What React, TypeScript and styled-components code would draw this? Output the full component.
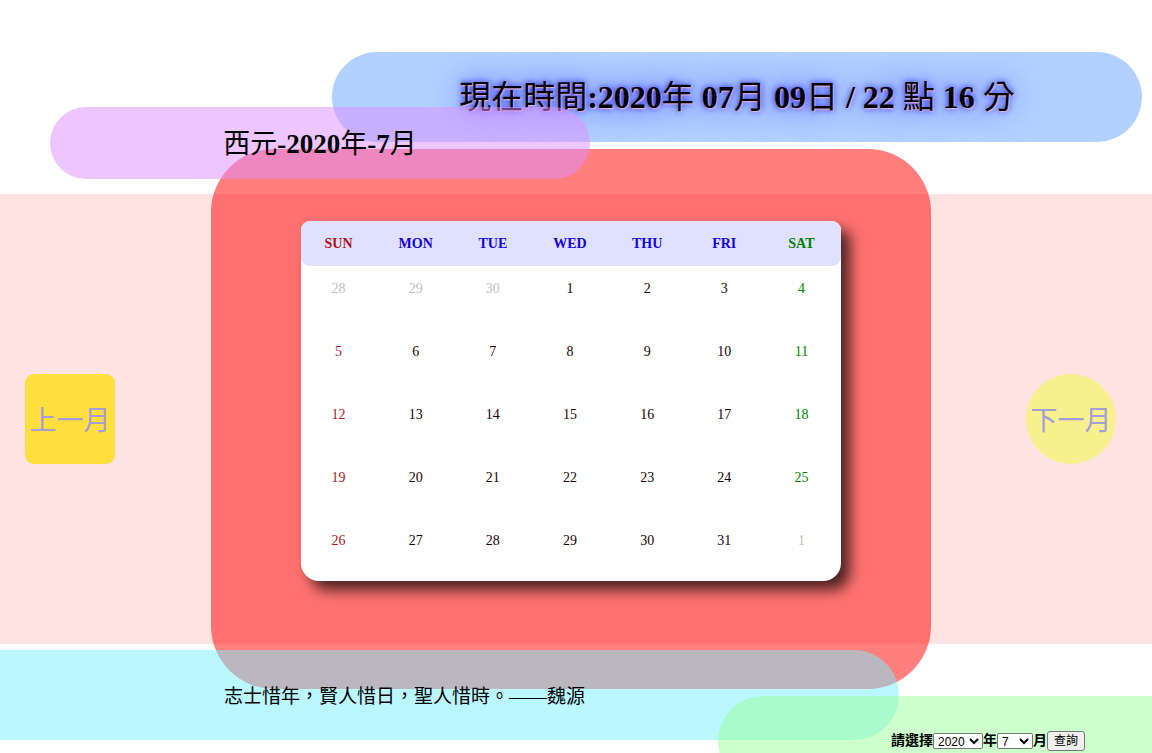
import React from "react";
import styled, { createGlobalStyle } from "styled-components";

const GlobalStyle = createGlobalStyle`
  *, *::before, *::after { box-sizing: border-box; }
  html { scrollbar-width: none; }
  body {
    margin: 0;
    background: #fff;
    color: #000;
    font-family: "Liberation Serif", "Noto Sans CJK TC", serif;
  }
`;

const Page = styled.div`
  display: flex;
  flex-direction: column;
  min-height: 100vh;
  overflow: hidden;
  padding-top: 52px;
`;

const Pill = styled.div`
  position: relative;
  display: flex;
  align-items: center;
  justify-content: center;
  max-width: 100%;
`;

const ClockPill = styled(Pill).attrs({ as: "header" })`
  align-self: flex-end;
  width: 810px;
  height: 90px;
  margin-right: 10px;
  border-radius: 45px;
  background: #b3d1ff;
`;

const Clock = styled.h1`
  margin: 0;
  font-size: 32px;
  line-height: 36px;
  font-weight: 400;
  white-space: nowrap;
  text-shadow: 1px 1px 2px pink, 0 0 32px rgba(0, 0, 255, 0.8), 0 0 6px blue;
`;

const MonthPill = styled(Pill)`
  z-index: 2;
  width: 540px;
  height: 72px;
  margin: -35px 0 0 50px;
  padding-top: 2px;
  border-radius: 36px;
  background: rgba(221, 141, 255, 0.5);
`;

const MonthTitle = styled.h2`
  margin: 0;
  font-size: 27px;
  line-height: 32px;
  font-weight: 400;
`;

const Band = styled.main`
  display: grid;
  grid-template-columns: 1fr auto 1fr;
  align-items: center;
  margin-top: 15px;
  padding-right: 10px;
  background: #ffe2e2;
`;

const Frame = styled.section`
  position: relative;
  margin: -45px 0;
  padding: 72px 90px 108px;
  border-radius: 63px;
  background: rgba(255, 0, 0, 0.5);
`;

const MonthLink = styled.a<{ $next?: boolean }>`
  display: flex;
  align-items: center;
  justify-content: center;
  justify-self: ${(p) => (p.$next ? "end" : "start")};
  width: 90px;
  height: 90px;
  margin: 0 26px 0 25px;
  padding-top: 4px;
  border-radius: ${(p) => (p.$next ? "50%" : "9px")};
  background: ${(p) => (p.$next ? "#f7f08f" : "#ffdf3d")};
  color: #a49dd8;
  font-size: 27px;
  line-height: 32px;
  white-space: nowrap;
  text-decoration: none;
`;

const Calendar = styled.table`
  width: 540px;
  table-layout: fixed;
  border-spacing: 0;
  border-radius: 9px 9px 18px 18px;
  background: #fff;
  box-shadow: 9px 9px 14px rgba(0, 0, 0, 0.7);
  font-size: 14px;
  line-height: 45px;
  text-align: center;
`;

const dayColor = (column: number, base: string) =>
  column === 0 ? "#b01217" : column === 6 ? "#008000" : base;

const WeekdayCell = styled.th<{ $column: number }>`
  height: 45px;
  padding: 0 2px 0 0;
  background: #dfe1ff;
  color: ${(p) => dayColor(p.$column, "#1400e0")};
  &:first-child { border-radius: 9px 0 0 9px; }
  &:last-child { border-radius: 0 9px 9px 0; }
`;

const DayCell = styled.td<{ $column: number; $outside: boolean }>`
  height: 63px;
  padding: 0 2px 0 0;
  vertical-align: top;
  color: ${(p) => (p.$outside ? "#c0c0c0" : dayColor(p.$column, "#200008"))};
`;

const QuotePill = styled(Pill)`
  z-index: 2;
  justify-content: flex-start;
  width: 899px;
  height: 90px;
  margin-top: 6px;
  padding: 4px 0 0 224px;
  border-radius: 0 45px 45px 0;
  background: rgba(119, 239, 255, 0.5);
`;

const Quote = styled.p`
  margin: 0;
  font-size: 19px;
  line-height: 24px;
  white-space: nowrap;
`;

const SearchPill = styled(Pill).attrs({ as: "footer" })`
  z-index: 3;
  align-self: flex-end;
  width: 540px;
  height: 90px;
  margin: -44px -106px 0 0;
  border-radius: 45px;
  background: rgba(153, 255, 153, 0.5);
`;

const SearchForm = styled.form`
  display: flex;
  align-items: center;
  font-size: 14px;
  line-height: 20px;
  font-weight: 700;
`;

const Choice = styled.select<{ $width: number }>`
  width: ${(p) => p.$width}px;
  height: 16px;
  padding: 0;
  margin: 0;
  border: 1px solid #767676;
  border-radius: 2px;
  background: #fff;
  color: #000;
  font: 12px "Liberation Sans", sans-serif;
`;

const SearchButton = styled.button`
  height: 20px;
  padding: 0 6px;
  border: 1px solid #767676;
  border-radius: 3px;
  background: #efefef;
  color: #000;
  font: 12px/16px "Liberation Sans", "Noto Sans CJK TC", sans-serif;
`;

const weekdays = ["SUN", "MON", "TUE", "WED", "THU", "FRI", "SAT"];

const weeks = [0, 1, 2, 3, 4].map((week) =>
  weekdays.map((_, column) => {
    const day = week * 7 + column - 2;
    if (day < 1) return { day: day + 30, outside: true };
    if (day > 31) return { day: day - 31, outside: true };
    return { day, outside: false };
  })
);

export default function App() {
  return (
    <>
      <GlobalStyle />
      <Page>
        <ClockPill>
          <Clock>
            現在時間<b>:2020</b>年 <b>07</b>月 <b>09</b>日 <b>/ 22</b> 點 <b>16</b> 分
          </Clock>
        </ClockPill>
        <MonthPill>
          <MonthTitle>
            西元<b>-2020</b>年<b>-7</b>月
          </MonthTitle>
        </MonthPill>
        <Band>
          <MonthLink href="#prev">上一月</MonthLink>
          <Frame>
            <Calendar>
              <thead>
                <tr>
                  {weekdays.map((name, column) => (
                    <WeekdayCell key={name} scope="col" $column={column}>
                      {name}
                    </WeekdayCell>
                  ))}
                </tr>
              </thead>
              <tbody>
                {weeks.map((week, index) => (
                  <tr key={index}>
                    {week.map(({ day, outside }, column) => (
                      <DayCell key={column} $column={column} $outside={outside}>
                        {day}
                      </DayCell>
                    ))}
                  </tr>
                ))}
              </tbody>
            </Calendar>
          </Frame>
          <MonthLink href="#next" $next>
            下一月
          </MonthLink>
        </Band>
        <QuotePill>
          <Quote>志士惜年，賢人惜日，聖人惜時。——魏源</Quote>
        </QuotePill>
        <SearchPill>
          <SearchForm onSubmit={(event) => event.preventDefault()}>
            <span>請選擇</span>
            <Choice id="year" $width={50} defaultValue="2020">
              <option>2019</option>
              <option>2020</option>
              <option>2021</option>
            </Choice>
            <label htmlFor="year">年</label>
            <Choice id="month" $width={36} defaultValue="7">
              {Array.from({ length: 12 }, (_, i) => (
                <option key={i}>{i + 1}</option>
              ))}
            </Choice>
            <label htmlFor="month">月</label>
            <SearchButton type="submit">查詢</SearchButton>
          </SearchForm>
        </SearchPill>
      </Page>
    </>
  );
}
